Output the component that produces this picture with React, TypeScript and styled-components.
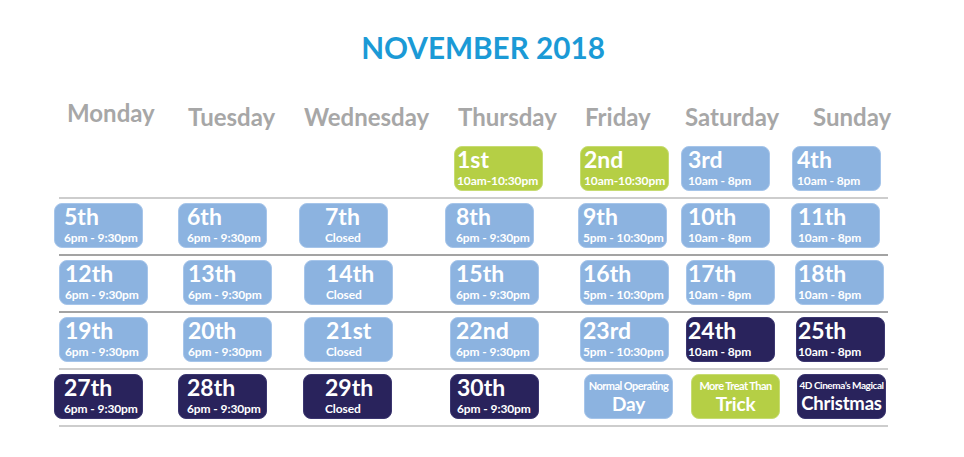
import React from 'react';
import styled, { createGlobalStyle } from 'styled-components';

type Tone = 'blue' | 'green' | 'navy';

const palette: Record<Tone, { bg: string; edge: string }> = {
  blue: { bg: '#8cb3e0', edge: '#a6c5ea' },
  green: { bg: '#b5cf45', edge: '#c7dc73' },
  navy: { bg: '#29235c', edge: '#3b3670' },
};

interface DayCell {
  kind: 'day';
  col: number;
  date: string;
  time: string;
  tone: Tone;
  dx: number;
  pad: number;
}

interface SpecialCell {
  kind: 'special';
  col: number;
  lead: string;
  main: string;
  tone: Tone;
  dx: number;
  compact?: boolean;
}

type Cell = DayCell | SpecialCell;

interface Week {
  line: 'light' | 'dark';
  cells: Cell[];
}

const d = (col: number, date: string, time: string, tone: Tone, dx: number, pad: number): DayCell => ({
  kind: 'day',
  col,
  date,
  time,
  tone,
  dx,
  pad,
});

const weeks: Week[] = [
  {
    line: 'light',
    cells: [
      d(4, '1st', '10am-10:30pm', 'green', 4, 3),
      d(5, '2nd', '10am-10:30pm', 'green', -3, 4),
      d(6, '3rd', '10am - 8pm', 'blue', -5, 7),
      d(7, '4th', '10am - 8pm', 'blue', -4, 5),
    ],
  },
  {
    line: 'dark',
    cells: [
      d(1, '5th', '6pm - 9:30pm', 'blue', -5, 10),
      d(2, '6th', '6pm - 9:30pm', 'blue', -5, 9),
      d(3, '7th', 'Closed', 'blue', -5, 26),
      d(4, '8th', '6pm - 9:30pm', 'blue', -5, 11),
      d(5, '9th', '5pm - 10:30pm', 'blue', -5, 5),
      d(6, '10th', '10am - 8pm', 'blue', -5, 7),
      d(7, '11th', '10am - 8pm', 'blue', -5, 7),
    ],
  },
  {
    line: 'dark',
    cells: [
      d(1, '12th', '6pm - 9:30pm', 'blue', 0, 6),
      d(2, '13th', '6pm - 9:30pm', 'blue', 0, 5),
      d(3, '14th', 'Closed', 'blue', 0, 22),
      d(4, '15th', '6pm - 9:30pm', 'blue', 0, 6),
      d(5, '16th', '5pm - 10:30pm', 'blue', -3, 3),
      d(6, '17th', '10am - 8pm', 'blue', 0, 2),
      d(7, '18th', '10am - 8pm', 'blue', -1, 3),
    ],
  },
  {
    line: 'light',
    cells: [
      d(1, '19th', '6pm - 9:30pm', 'blue', 0, 6),
      d(2, '20th', '6pm - 9:30pm', 'blue', 0, 5),
      d(3, '21st', 'Closed', 'blue', 0, 22),
      d(4, '22nd', '6pm - 9:30pm', 'blue', 0, 6),
      d(5, '23rd', '5pm - 10:30pm', 'blue', -3, 3),
      d(6, '24th', '10am - 8pm', 'navy', 0, 2),
      d(7, '25th', '10am - 8pm', 'navy', 0, 2),
    ],
  },
  {
    line: 'light',
    cells: [
      d(1, '27th', '6pm - 9:30pm', 'navy', -5, 10),
      d(2, '28th', '6pm - 9:30pm', 'navy', -5, 9),
      d(3, '29th', 'Closed', 'navy', -1, 22),
      d(4, '30th', '6pm - 9:30pm', 'navy', 0, 7),
      { kind: 'special', col: 5, lead: 'Normal Operating', main: 'Day', tone: 'blue', dx: 1 },
      { kind: 'special', col: 6, lead: 'More Treat Than', main: 'Trick', tone: 'green', dx: 5 },
      { kind: 'special', col: 7, lead: '4D Cinema’s Magical', main: 'Christmas', tone: 'navy', dx: 1, compact: true },
    ],
  },
];

const days: { name: string; lift: number }[] = [
  { name: 'Monday', lift: 4 },
  { name: 'Tuesday', lift: 0 },
  { name: 'Wednesday', lift: 0 },
  { name: 'Thursday', lift: 0 },
  { name: 'Friday', lift: 0 },
  { name: 'Saturday', lift: 0 },
  { name: 'Sunday', lift: 0 },
];

const GlobalStyle = createGlobalStyle`
  html, body {
    margin: 0;
    padding: 0;
    background: #ffffff;
  }
  body {
    font-family: Lato, "Open Sans", sans-serif;
  }
`;

const Page = styled.div`
  width: 964px;
  height: 457px;
  box-sizing: border-box;
  padding-top: 33px;
  font-family: Lato, "Open Sans", sans-serif;
  overflow: hidden;
`;

const Title = styled.h1`
  margin: 0;
  text-align: center;
  font-size: 29.7px;
  line-height: 29px;
  font-weight: 700;
  color: #1b9ad6;
  padding-left: 2px;
`;

const Calendar = styled.div`
  margin-top: 44px;
  margin-left: 54px;
  width: 835px;
`;

const HeaderRow = styled.div`
  display: grid;
  grid-template-columns: 121px 116px 154px 127px 100px 128px 1fr;
  padding-left: 13px;
  height: 22px;
  margin-bottom: 14px;
`;

const DayName = styled.div<{ $lift: number }>`
  font-size: 24px;
  line-height: 22px;
  font-weight: 700;
  color: #a7a7a7;
  white-space: nowrap;
  margin-top: ${(p) => -p.$lift}px;
`;

const WeekRow = styled.div<{ $line: 'light' | 'dark' }>`
  margin-left: 5px;
  width: 829px;
  display: grid;
  grid-template-columns: 124px 121px 146px 133px 103px 110px 1fr;
  padding: 4px 0 6px;
  border-bottom: 2px solid ${(p) => (p.$line === 'dark' ? '#a3a3a3' : '#cdcdcd')};
`;

const Box = styled.div<{ $tone: Tone; $dx: number; $col: number; $pad?: number }>`
  grid-column: ${(p) => p.$col};
  margin-left: ${(p) => p.$dx}px;
  width: 89px;
  height: 45px;
  box-sizing: border-box;
  border-radius: 8px;
  background: ${(p) => palette[p.$tone].bg};
  border: 1px solid ${(p) => palette[p.$tone].edge};
  color: #ffffff;
  display: flex;
  flex-direction: column;
  align-items: flex-start;
  padding: 1px 0 0 ${(p) => Math.max((p.$pad ?? 1) - 1, 0)}px;
  overflow: hidden;
`;

const DateText = styled.div`
  font-size: 23px;
  line-height: 23px;
  font-weight: 700;
  white-space: nowrap;
`;

const TimeText = styled.div`
  margin-top: 3px;
  font-size: 12px;
  line-height: 14px;
  font-weight: 700;
  white-space: nowrap;
  letter-spacing: -0.1px;
`;

const SpecialBox = styled(Box)`
  align-items: center;
  padding: 4px 0 0;
`;

const LeadText = styled.div<{ $compact?: boolean }>`
  font-size: ${(p) => (p.$compact ? 10 : 11)}px;
  line-height: 13.4px;
  font-weight: 700;
  letter-spacing: ${(p) => (p.$compact ? -0.45 : -0.55)}px;
  white-space: nowrap;
`;

const MainText = styled.div<{ $compact?: boolean }>`
  font-size: ${(p) => (p.$compact ? 18.5 : 19)}px;
  line-height: 23px;
  font-weight: 700;
  letter-spacing: -0.2px;
  white-space: nowrap;
`;

function CellView({ cell }: { cell: Cell }) {
  if (cell.kind === 'special') {
    return (
      <SpecialBox $tone={cell.tone} $dx={cell.dx} $col={cell.col}>
        <LeadText $compact={cell.compact}>{cell.lead}</LeadText>
        <MainText $compact={cell.compact}>{cell.main}</MainText>
      </SpecialBox>
    );
  }
  return (
    <Box $tone={cell.tone} $dx={cell.dx} $col={cell.col} $pad={cell.pad}>
      <DateText>{cell.date}</DateText>
      <TimeText>{cell.time}</TimeText>
    </Box>
  );
}

export default function App() {
  return (
    <>
      <GlobalStyle />
      <Page>
        <Title>NOVEMBER 2018</Title>
        <Calendar>
          <HeaderRow>
            {days.map((day) => (
              <DayName key={day.name} $lift={day.lift}>
                {day.name}
              </DayName>
            ))}
          </HeaderRow>
          {weeks.map((week, i) => (
            <WeekRow key={i} $line={week.line}>
              {week.cells.map((cell) => (
                <CellView key={cell.kind === 'day' ? cell.date : cell.main} cell={cell} />
              ))}
            </WeekRow>
          ))}
        </Calendar>
      </Page>
    </>
  );
}
